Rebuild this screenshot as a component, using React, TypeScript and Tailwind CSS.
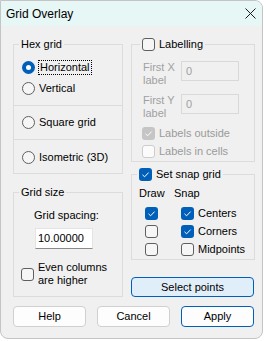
import React from 'react';

const Check = ({ color = 'white' }: { color?: string }) => (
  <svg width="13" height="13" viewBox="0 0 13 13" className="block">
    <path d="M3.5 6.8 L5.6 8.8 L9.6 4.6" fill="none" stroke={color} strokeWidth="1" />
  </svg>
);

const Checkbox = ({ checked = false, disabled = false }: { checked?: boolean; disabled?: boolean }) => {
  if (checked && disabled) {
    return (
      <span className="w-[13px] h-[13px] shrink-0 rounded-[3px] bg-[#c5c5c5]">
        <Check />
      </span>
    );
  }
  if (checked) {
    return (
      <span className="w-[13px] h-[13px] shrink-0 rounded-[3px] bg-[#005fb8]">
        <Check />
      </span>
    );
  }
  return (
    <span
      className={
        disabled
          ? 'w-[13px] h-[13px] shrink-0 rounded-[3px] border border-[#cdcdcd] bg-[#fbfbfb]'
          : 'w-[13px] h-[13px] shrink-0 rounded-[3px] border border-[#5f5f5f] bg-[#f6f6f6]'
      }
    />
  );
};

const Radio = ({ checked = false }: { checked?: boolean }) =>
  checked ? (
    <span className="w-[13px] h-[13px] shrink-0 rounded-full bg-[#005fb8] flex items-center justify-center">
      <span className="w-[5px] h-[5px] rounded-full bg-white" />
    </span>
  ) : (
    <span className="w-[13px] h-[13px] shrink-0 rounded-full border border-[#5f5f5f] bg-[#f6f6f6]" />
  );

const Button = ({ label, primary = false }: { label: string; primary?: boolean }) => (
  <button
    className={
      primary
        ? 'w-[73px] h-[21px] rounded-[4px] border border-[#005fb8] bg-[#fdfdfd] text-[11px] leading-[13px]'
        : 'w-[73px] h-[21px] rounded-[4px] border border-[#d0d0d0] bg-[#fdfdfd] text-[11px] leading-[13px]'
    }
  >
    {label}
  </button>
);

export default function App() {
  return (
    <div className="w-[266px] h-[341px] bg-white text-black font-['Liberation_Sans',Arial,sans-serif] text-[11px] leading-[13px]">
      <div className="w-[263px] h-[339px] bg-[#f0f0f0] border border-[#c4c4c4] rounded-tr-[8px] rounded-b-[8px] overflow-hidden flex flex-col">
        {/* Title bar */}
        <div className="h-[25px] shrink-0 bg-[#e6f7f6] flex items-center justify-between pl-[5px] pr-[6px]">
          <span className="text-[12px] leading-[14px]">Grid Overlay</span>
          <svg width="11" height="11" viewBox="0 0 11 11">
            <path d="M0.5 0.5 L10.5 10.5 M10.5 0.5 L0.5 10.5" stroke="#1a1a1a" strokeWidth="1" />
          </svg>
        </div>

        <div className="pl-[12px]">
          <div className="flex items-start gap-[8px] pt-[12px]">
            {/* Left column */}
            <div className="w-[110px] flex flex-col">
              <fieldset className="border border-[#dcdcdc]">
                <legend className="ml-[5px] px-[2px] leading-[13px]">Hex grid</legend>
                <div className="pt-[6px] pb-[6px] pl-[8px]">
                  <div className="h-[21px] flex items-center gap-[3px]">
                    <Radio checked />
                    <span className="border border-dotted border-black px-[1px] leading-[13px]">Horizontal</span>
                  </div>
                  <div className="h-[21px] flex items-center gap-[4px]">
                    <Radio />
                    <span>Vertical</span>
                  </div>
                </div>
                <div className="h-[34px] border-t border-[#dcdcdc] flex items-center gap-[4px] pl-[8px]">
                  <Radio />
                  <span>Square grid</span>
                </div>
                <div className="h-[34px] border-t border-[#dcdcdc] flex items-center gap-[4px] pl-[8px] pt-[2px]">
                  <Radio />
                  <span>Isometric (3D)</span>
                </div>
              </fieldset>

              <fieldset className="mt-[12px] border border-[#dcdcdc] pb-[9px]">
                <legend className="ml-[5px] px-[2px] leading-[13px]">Grid size</legend>
                <div className="mt-[10px] pl-[20px]">Grid spacing:</div>
                <div className="mt-[6px] ml-[21px] w-[58px] h-[21px] bg-white border border-[#e4e4e4] border-b-[#8a8a8a] flex items-center pl-[2px]">
                  10.00000
                </div>
                <div className="mt-[12px] pl-[7px] flex items-center gap-[4px]">
                  <Checkbox />
                  <span>
                    Even columns
                    <br />
                    are higher
                  </span>
                </div>
              </fieldset>
            </div>

            {/* Right column */}
            <div className="w-[124px] flex flex-col">
              <fieldset className="border border-[#dcdcdc] pb-[1px]">
                <legend className="ml-[8px] px-[2px] h-[13px] flex items-center gap-[4px]">
                  <Checkbox />
                  <span>Labelling</span>
                </legend>
                <div className="mt-[10px] pl-[11px] flex items-start">
                  <span className="w-[38px] text-[#a0a0a0]">
                    First X
                    <br />
                    label
                  </span>
                  <span className="w-[58px] h-[20px] border border-[#d9d9d9] flex items-center pl-[4px] text-[#a0a0a0]">0</span>
                </div>
                <div className="mt-[7px] pl-[11px] flex items-start">
                  <span className="w-[38px] text-[#a0a0a0]">
                    First Y
                    <br />
                    label
                  </span>
                  <span className="w-[58px] h-[20px] border border-[#d9d9d9] flex items-center pl-[4px] text-[#a0a0a0]">0</span>
                </div>
                <div className="mt-[4px] h-[18px] pl-[10px] flex items-center gap-[4px] text-[#9a9a9a]">
                  <Checkbox checked disabled />
                  <span>Labels outside</span>
                </div>
                <div className="h-[18px] pl-[10px] flex items-center gap-[4px] text-[#9a9a9a]">
                  <Checkbox disabled />
                  <span>Labels in cells</span>
                </div>
              </fieldset>

              <fieldset className="mt-[6px] border border-[#dcdcdc] pb-[1px]">
                <legend className="ml-[5px] px-[2px] h-[13px] flex items-center gap-[4px]">
                  <Checkbox checked />
                  <span>Set snap grid</span>
                </legend>
                <div className="mt-[6px] pl-[7px] grid grid-cols-[35px_1fr]">
                  <span>Draw</span>
                  <span>Snap</span>
                </div>
                <div className="mt-[4px] pl-[7px] grid grid-cols-[35px_1fr]">
                  {[
                    { draw: true, snap: true, label: 'Centers' },
                    { draw: false, snap: true, label: 'Corners' },
                    { draw: false, snap: false, label: 'Midpoints' },
                  ].map(row => (
                    <React.Fragment key={row.label}>
                      <div className="h-[18px] flex items-center pl-[6px]">
                        <Checkbox checked={row.draw} />
                      </div>
                      <div className="h-[18px] flex items-center gap-[4px] pl-[7px]">
                        <Checkbox checked={row.snap} />
                        <span>{row.label}</span>
                      </div>
                    </React.Fragment>
                  ))}
                </div>
              </fieldset>

              <button className="mt-[17px] w-[123px] h-[20px] rounded-[4px] border border-[#005fb8] bg-[#e0eef9] text-[11px] leading-[13px]">
                Select points
              </button>
            </div>
          </div>

          {/* Bottom buttons */}
          <div className="mt-[9px] flex gap-[11px]">
            <Button label="Help" />
            <Button label="Cancel" />
            <Button label="Apply" primary />
          </div>
        </div>
      </div>
    </div>
  );
}
